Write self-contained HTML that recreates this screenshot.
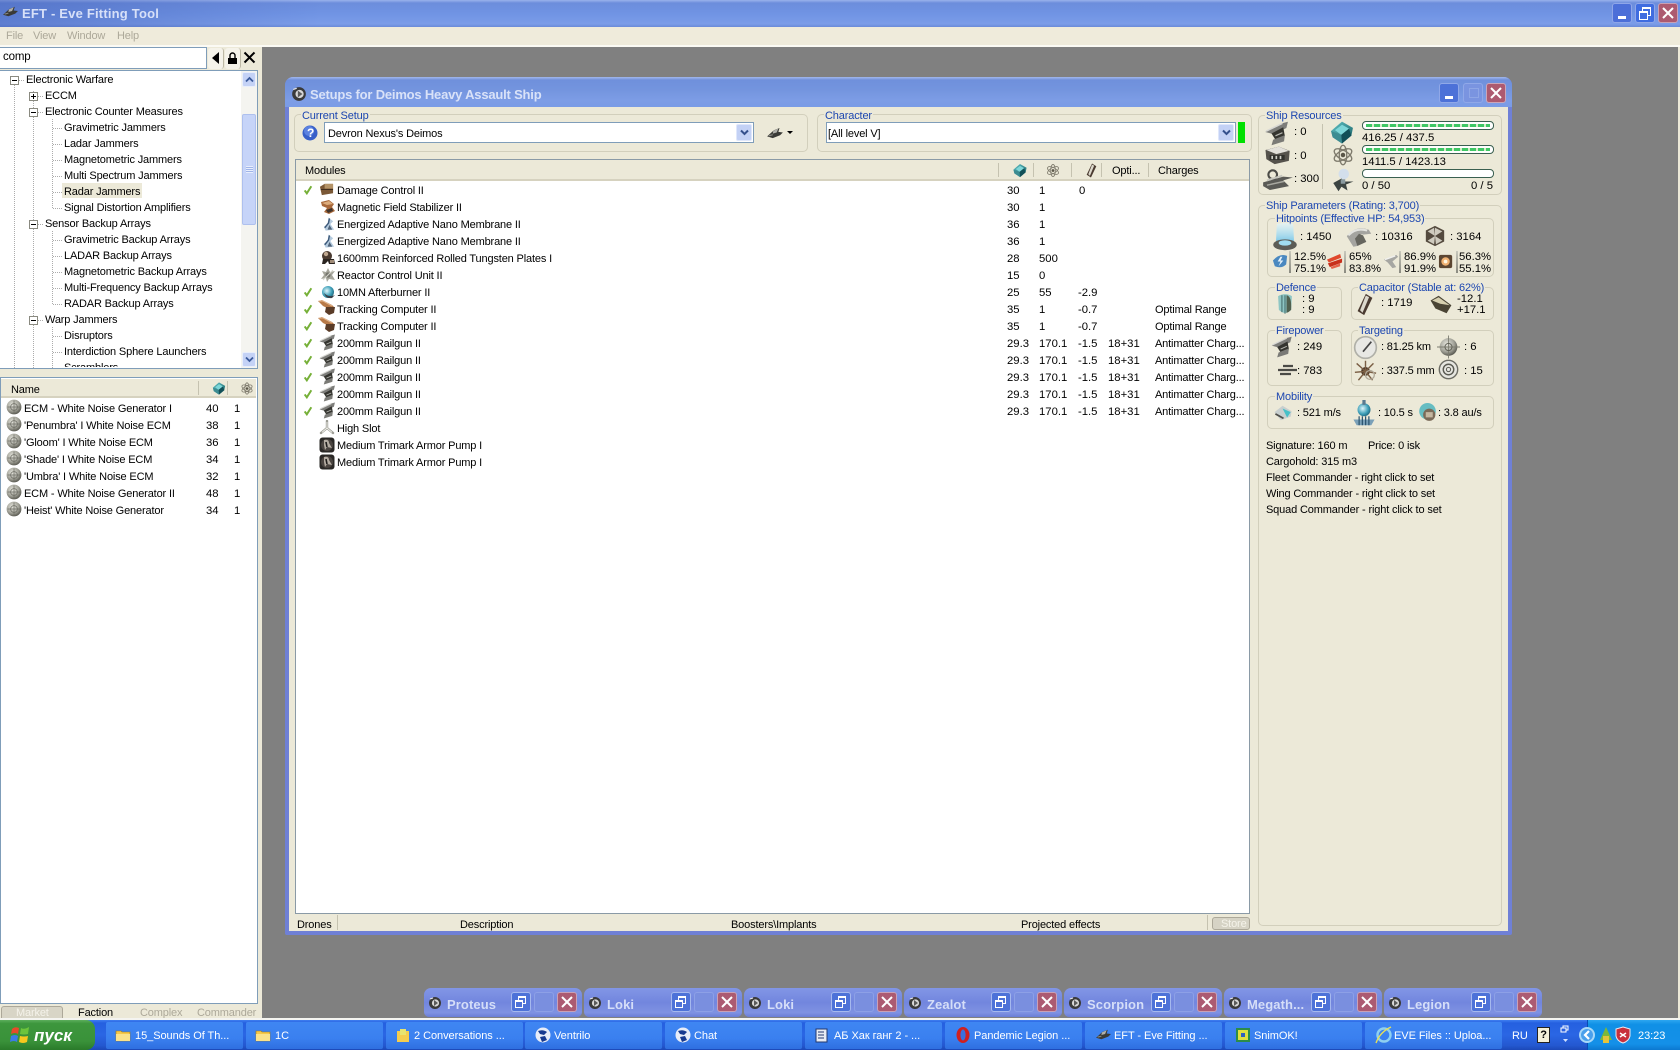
<!DOCTYPE html>
<html><head><meta charset="utf-8"><title>EFT - Eve Fitting Tool</title>
<style>
html,body{margin:0;padding:0;width:1680px;height:1050px;overflow:hidden;background:#808080}
body{position:relative;font-family:"Liberation Sans","Noto Sans CJK SC",sans-serif;font-size:11px;letter-spacing:-.15px;color:#000}
div,span,svg{position:absolute}
.t{white-space:nowrap;line-height:16px;height:16px;margin-top:1px}
.n{font-size:11.3px;letter-spacing:0}
.fs{border:1px solid #d2cfbc;border-radius:5px;box-sizing:border-box}
.lb{white-space:nowrap;line-height:14px;height:14px;margin-top:1px;color:#1c46b0;background:#ece9d8;padding:0 1px 0 1px}
.g{color:#aca899}
.w{color:#fff}
.bar{height:9px;width:132px;left:1362px;border:1px solid #3a5f50;border-radius:4px;box-sizing:border-box;background:#fff}
.bar i{position:absolute;left:3px;right:3px;top:2px;height:3px;background:repeating-linear-gradient(90deg,#3fc765 0 6px,#d5ecc9 6px 8px)}
.mw{top:988px;width:158px;height:29px;border-radius:7px 7px 5px 5px;background:linear-gradient(#8296e6,#7286de 50%,#7f92e2 85%,#6a7ed6)}
.mt{left:23px;top:9px;font-weight:bold;font-size:13px;line-height:16px;color:#d5def8;white-space:nowrap;letter-spacing:.1px}
.br,.bm,.bc{top:4px;width:20px;height:20px;border-radius:3px;box-sizing:border-box}
.br{left:87px;background:#4d72d8;border:1px solid #a6b9ee}
.bm{left:110px;background:#7a8fdf;border:1px solid #8da0e6}
.bc{left:133px;background:#ac5b72;border:1px solid #c9a0b6}
.tb{top:1022px;height:27px;width:137px;background:linear-gradient(#3f86f2,#3a80f0 60%,#2f6fe0);border-radius:2px}
.tbt{top:1028px;line-height:16px;color:#fff;white-space:nowrap;font-size:11px;letter-spacing:-.05px}
</style></head><body>

<svg width="0" height="0" style="left:0;top:0">
<defs>
<radialGradient id="gs" cx=".4" cy=".35" r=".7"><stop offset="0" stop-color="#e6e6de"/><stop offset=".6" stop-color="#a2a298"/><stop offset="1" stop-color="#4e4e46"/></radialGradient>
<radialGradient id="gb" cx=".4" cy=".4" r=".7"><stop offset="0" stop-color="#dff6fb"/><stop offset=".6" stop-color="#3e9fb8"/><stop offset="1" stop-color="#1a5a70"/></radialGradient>
<linearGradient id="gt" x1="0" y1="0" x2="1" y2="1"><stop offset="0" stop-color="#63c4c8"/><stop offset="1" stop-color="#145c60"/></linearGradient>
<linearGradient id="gh" x1="0" y1="0" x2="0" y2="1"><stop offset="0" stop-color="#e4f6fb" stop-opacity=".7"/><stop offset="1" stop-color="#7cc8e8"/></linearGradient>
</defs>
<symbol id="chk" viewBox="0 0 12 12"><path d="M2 6.500 L4.600 10 L10 1.500" fill="none" stroke="#76b038" stroke-width="2.400"/></symbol>
<symbol id="dc" viewBox="0 0 16 16"><path d="M1 5 L6 2 L15 2 L15 12 L3 14Z" fill="#7a5836"/><path d="M6 2h9v5H6z" fill="#b59468"/><path d="M2 8h13" stroke="#3e2c1c"/></symbol>
<symbol id="mag" viewBox="0 0 16 16"><path d="M1 3 L9 1 L14 5 L12 8 L15 12 L9 15 L4 13 L7 9 L2 7Z" fill="#a8683a"/><path d="M2 4l7-2 4 3-6 1z" fill="#dcac7c"/><path d="M6 11l6-2 1 3-5 2z" fill="#40342c"/></symbol>
<symbol id="nano" viewBox="0 0 16 16"><path d="M8 1 L13 5 L10 8 L14 14 L5 15 L3 11 L7 8Z" fill="#b4cade"/><path d="M9 2 L8 7 L4 12" stroke="#3c5878" stroke-width="1.500" fill="none"/><path d="M9 9l3 5-5 0z" fill="#50647a"/></symbol>
<symbol id="plate" viewBox="0 0 16 16"><circle cx="7" cy="6" r="5" fill="#4a3a30"/><circle cx="6" cy="4" r="2.200" fill="#c0a890"/><path d="M3 9h11l1 5H9l-1-3-3 3H2z" fill="#2a2420"/><path d="M10 10h4v3h-4z" fill="#a08c78"/></symbol>
<symbol id="rcu" viewBox="0 0 16 16"><path d="M8 1 L10 5 L15 4 L12 8 L15 13 L9 12 L7 15 L6 11 L1 12 L4 8 L2 4 L6 5Z" fill="#a6a69c"/><circle cx="8" cy="8" r="2.600" fill="#76766e"/><path d="M3 13L13 3" stroke="#d8d8cf"/></symbol>
<symbol id="ab" viewBox="0 0 16 16"><circle cx="8" cy="8" r="6" fill="url(#gb)"/><path d="M4 9 Q9 14 15 11 L12 14 Q6 15 4 9Z" fill="#3a4048"/></symbol>
<symbol id="tc" viewBox="0 0 18 16"><path d="M0 1 L4 0 L14 5 L17 8 L13 10 L5 6Z" fill="#b87a48"/><path d="M1 1l4 0 9 5" stroke="#e4b890" fill="none"/><path d="M8 7h9l-1 6-5 2-4-3z" fill="#5a3c28"/></symbol>
<symbol id="gun" viewBox="0 0 32 32"><path d="M1 14 L22 3 L30 1 L28 9 L12 17Z" fill="#7d7d7a"/><path d="M2 13 L23 3" stroke="#d8d8d4" stroke-width="2"/><path d="M9 16 L24 8 L26 19 L14 24Z" fill="#34342f"/><path d="M11 24 L26 18 L25 26 L9 31Z" fill="#7a7a76"/><path d="M14 19l9-4" stroke="#b6b6b0" stroke-width="1.500"/></symbol>
<symbol id="slot" viewBox="0 0 16 16"><path d="M8 1v7M8 8L2 13M8 8l6 5" stroke="#9c9c94" stroke-width="2.400" fill="none" stroke-linecap="round"/><path d="M8 2v6M8 8L3 12.400M8 8l5 4.400" stroke="#f0f0ea" stroke-width=".9" fill="none"/></symbol>
<symbol id="pump" viewBox="0 0 16 16"><rect x=".5" y=".5" width="15" height="15" rx="3" fill="#2a2826"/><circle cx="8" cy="8" r="6" fill="#4a4440"/><path d="M5 3 Q10 2 10 6 L13 11 L8 10 L6 13 L5 8Z" fill="#b4aca2"/><path d="M7 5l1 5" stroke="#1e1c1a" stroke-width="1.600"/></symbol>
<symbol id="ecm" viewBox="0 0 16 16"><circle cx="8" cy="8" r="7.400" fill="url(#gs)"/><path d="M1.500 8h13M8 1.500v13" stroke="#6c6c64" stroke-width=".7"/><circle cx="8" cy="8" r="3.400" fill="none" stroke="#6c6c64" stroke-width=".7"/></symbol>
<symbol id="cpu" viewBox="0 0 32 32"><path d="M2 14 L16 2 L30 10 L28 20 L16 30 L4 22Z" fill="url(#gt)"/><path d="M7 13 L16 6 L25 11 L15 19Z" fill="#7dd6d8"/><path d="M15 19 L16 30 L28 20 L25 11Z" fill="#125058"/><path d="M2 14l2 8 12 8-1-11z" fill="#3c8c92"/></symbol>
<symbol id="atom" viewBox="0 0 32 32"><g fill="none" stroke="#7e7a6c" stroke-width="1.800"><ellipse cx="16" cy="16" rx="13" ry="6" transform="rotate(30 16 16)"/><ellipse cx="16" cy="16" rx="13" ry="6" transform="rotate(-30 16 16)"/><ellipse cx="16" cy="16" rx="13" ry="5" transform="rotate(90 16 16)"/></g><circle cx="16" cy="16" r="3" fill="#5a5648"/></symbol>
<symbol id="drone" viewBox="0 0 32 32"><circle cx="17" cy="8" r="7" fill="#d3dfec"/><path d="M3 20 L14 14 L17 18 L30 18 L20 22 L22 30 L14 25 L10 31Z" fill="#3c4442"/><path d="M13 15h6v6h-6z" fill="#8a9aa0"/></symbol>
<symbol id="ship2" viewBox="0 0 32 20"><path d="M2 16 L14 5 L24 1 L22 8 L30 9 L25 14 L12 19Z" fill="#3a3a36"/><path d="M13 6l9-4-3 7-7 2z" fill="#b0b0aa"/><path d="M5 15l7-2" stroke="#8a8a84" stroke-width="2"/></symbol>
<symbol id="mod2" viewBox="0 0 32 24"><path d="M1 6 L17 2 L30 7 L29 19 L12 23 L2 17Z" fill="#55524c"/><path d="M2 6 L17 2 L29 7 L14 11Z" fill="#e2e0da"/><path d="M6 12h18v6H6z" fill="#30302c"/><path d="M8 13h2v4H8zM13 13h2v4h-2zM18 13h2v4h-2z" fill="#cfcfc8"/></symbol>
<symbol id="launch" viewBox="0 0 32 24"><path d="M1 16 L22 10 L32 11 L22 14 L28 20 L8 24 L1 20Z" fill="#5a5a56"/><circle cx="11" cy="8" r="4.500" fill="none" stroke="#4c4c48" stroke-width="2.200"/><path d="M5 14l16-5" stroke="#c6c6be" stroke-width="2"/><path d="M5 19l18-4" stroke="#a8a8a0" stroke-width="1.500"/></symbol>
<symbol id="shield" viewBox="0 0 28 32"><path d="M5 1 Q14 -1 23 1 L24 21 L4 21Z" fill="url(#gh)"/><ellipse cx="14" cy="24" rx="13" ry="6" fill="#5c5c56"/><ellipse cx="14" cy="22" rx="7" ry="3" fill="#a0dcf0"/></symbol>
<symbol id="armor" viewBox="0 0 32 26"><path d="M1 12 Q12 -2 28 4 L31 9 L21 10 Q17 8 12 14 L14 24 L9 25Z" fill="#a4a4a0"/><path d="M3 11 Q12 1 26 5" stroke="#e4e4e0" stroke-width="2.500" fill="none"/><path d="M11 15l5-6 5 2 4 8-11 5z" fill="#66665f"/></symbol>
<symbol id="hull" viewBox="0 0 24 24"><path d="M12 1 L22 6 L22 18 L12 23 L2 18 L2 6Z" fill="#544a3e"/><path d="M12 3 L12 12 L20 7Z M12 12 L4 7 L11 3Z M12 12 L20 17 L13 21Z M12 12 L4 17 L11 21Z" fill="#cfcbbf"/></symbol>
<symbol id="rem" viewBox="0 0 18 18"><path d="M1 8 Q8 0 16 3 L15 12 Q10 17 3 14Z" fill="#4a88c0"/><path d="M9 4L6 9h3l-2 5 5-6H9l2-4z" fill="#e6f2fa"/></symbol>
<symbol id="rth" viewBox="0 0 18 18"><path d="M1 7 L15 1 L16 5 L3 10Z" fill="#e0482c"/><path d="M2 11 L17 6 L17 10 L4 15Z" fill="#c8301c"/><path d="M5 15 L15 11 L15 14 L6 17Z" fill="#e4634a"/></symbol>
<symbol id="rkn" viewBox="0 0 18 18"><path d="M1 7 L14 2 L16 4 L10 9 L14 15 L10 16 L5 10Z" fill="#a6a6a2"/><path d="M2 7l11-4" stroke="#f0f0ee" stroke-width="1.500"/></symbol>
<symbol id="rex" viewBox="0 0 18 18"><rect x="1" y="2" width="14" height="14" rx="2" fill="#5c4632"/><circle cx="8" cy="9" r="4.500" fill="#f0b070"/><circle cx="8" cy="9" r="2" fill="#fff6e0"/></symbol>
<symbol id="mini" viewBox="0 0 14 14"><circle cx="7" cy="7" r="6" fill="#3a3a3a"/><circle cx="7.500" cy="7" r="3.600" fill="#d8d8d8"/><path d="M6 4l4 3-4 3z" fill="#5a5a5a"/><path d="M2 3l3-1" stroke="#e8e8e8"/></symbol>
<symbol id="ub" viewBox="0 0 26 30"><path d="M4 4 Q13 -1 22 4 L21 22 Q13 30 5 22Z" fill="#8ec6c4"/><path d="M9 3 L9 25 M13 3 L13 27" stroke="#3a5e5e" stroke-width="1.200"/><path d="M15 3 Q22 4 21 22 Q18 25 15 26Z" fill="#50604f"/></symbol>
<symbol id="capb" viewBox="0 0 20 28"><path d="M11 1 L19 6 L9 27 L1 22Z" fill="#4a3a30"/><path d="M11 3 L15 5 L7 24 L4 21Z" fill="#dcd8cc"/></symbol>
<symbol id="capr" viewBox="0 0 30 26"><path d="M2 8 L12 2 L28 14 L22 24 L8 18Z" fill="#4a4434"/><path d="M4 8 L12 4 L26 14 L14 12Z" fill="#d6cfaf"/></symbol>
<symbol id="speed" viewBox="0 0 30 30"><circle cx="15" cy="15" r="13" fill="#e8e8e4" stroke="#b0b0a8" stroke-width="2"/><path d="M12 20L22 8" stroke="#444" stroke-width="2"/></symbol>
<symbol id="compass" viewBox="0 0 26 26"><circle cx="13" cy="13" r="10" fill="url(#gs)"/><path d="M13 0v26M0 13h26" stroke="#7c7c70"/><circle cx="13" cy="13" r="4" fill="none" stroke="#5c5c52"/></symbol>
<symbol id="spider" viewBox="0 0 26 26"><circle cx="13" cy="14" r="5" fill="#4a3626"/><path d="M13 14L3 5M13 14L22 5M13 14L1 15M13 14L25 16M13 14L5 24M13 14L21 24M13 14L13 2" stroke="#7a5e44" stroke-width="1.600"/><circle cx="18" cy="18" r="5" fill="none" stroke="#b0a898" stroke-width="1.500"/></symbol>
<symbol id="target" viewBox="0 0 24 24"><circle cx="12" cy="12" r="10.500" fill="#e6e6e0" stroke="#6c6c64" stroke-width="1.600"/><circle cx="12" cy="12" r="6" fill="none" stroke="#5a5a52" stroke-width="1.600"/><circle cx="12" cy="12" r="2.400" fill="none" stroke="#5a5a52" stroke-width="1.200"/></symbol>
<symbol id="abl" viewBox="0 0 22 20"><path d="M1 9 L10 2 L20 8 L19 14 L8 18Z" fill="#c8cfcf"/><path d="M10 5 L19 9 L15 15Z" fill="#46c0c8"/><path d="M2 11l9 5" stroke="#4e4e4a" stroke-width="2"/></symbol>
<symbol id="warp" viewBox="0 0 30 32"><circle cx="15" cy="12" r="8" fill="url(#gb)"/><path d="M13 0h4v6h-4z" fill="#5a7a90"/><path d="M2 24 L28 24 L24 31 L6 31Z" fill="#7aa0b8"/><path d="M9 20v11M13 20v11M17 20v11M21 20v11" stroke="#2c5470" stroke-width="1.500"/></symbol>
<symbol id="warp2" viewBox="0 0 24 26"><circle cx="12" cy="11" r="9.500" fill="#66bdc2"/><circle cx="14" cy="15" r="7" fill="#7a6a58"/><path d="M10 12h8v6h-8z" fill="#c4b6a0"/></symbol>
<symbol id="folder" viewBox="0 0 16 14"><path d="M1 3h5l1 1h8v9H1z" fill="#f5c84a" stroke="#a07a18" stroke-width=".6"/><path d="M1 6h14v7H1z" fill="#fbe28a"/></symbol>
</svg>

<!-- App title -->
<div style="left:0;top:0;width:1680px;height:27px;background:linear-gradient(#9ab2ec 0,#6c8ddc 3px,#7094e4 14px,#7b9ce8 24px,#6a8ad8 100%)"></div>
<div style="left:0;top:0;width:320px;height:27px;background:linear-gradient(90deg,rgba(60,90,180,.45),rgba(60,90,180,0))"></div>
<svg style="left:2px;top:5px" width="17" height="13"><use href="#ship2" width="17" height="13"/></svg>
<div class="t" style="left:22px;top:5px;font-weight:bold;font-size:13px;color:#d7e0f8;letter-spacing:.2px">EFT - Eve Fitting Tool</div>
<div style="left:1612px;top:3px;width:20px;height:20px;background:#4c6fd8;border:1px solid #8fa6e8;box-sizing:border-box;border-radius:3px"><div style="left:5px;top:12px;width:8px;height:3px;background:#fff"></div></div>
<div style="left:1635px;top:3px;width:20px;height:20px;background:#3f6ce0;border:1px solid #8fa6e8;box-sizing:border-box;border-radius:3px"><div style="left:6px;top:3px;width:7px;height:6px;border:1px solid #fff;border-top-width:2px"></div><div style="left:3px;top:7px;width:7px;height:6px;border:1px solid #fff;border-top-width:2px;background:#3f6ce0"></div></div>
<div style="left:1658px;top:3px;width:20px;height:20px;background:#ad5a70;border:1px solid #c8a0b4;box-sizing:border-box;border-radius:3px"><svg style="left:3px;top:3px" width="12" height="12"><path d="M1 1L11 11M11 1L1 11" stroke="#fff" stroke-width="2"/></svg></div>

<!-- Menu -->
<div style="left:0;top:27px;width:1680px;height:18px;background:#efebdb"></div>
<div style="left:0;top:45px;width:1680px;height:2px;background:#fbfaf4"></div>
<div class="t g" style="left:6px;top:27px">File</div>
<div class="t g" style="left:33px;top:27px">View</div>
<div class="t g" style="left:67px;top:27px">Window</div>
<div class="t g" style="left:117px;top:27px">Help</div>

<!-- Right sliver -->
<div style="left:1678px;top:47px;width:2px;height:972px;background:#ece9d8"></div>

<!-- Left panel -->
<div style="left:0;top:47px;width:262px;height:972px;background:#ece9d8"></div>
<div style="left:0;top:47px;width:207px;height:22px;background:#fff;border:1px solid #7f9db9;border-left:0;box-sizing:border-box"></div>
<div class="t" style="left:3px;top:48px;font-size:11.5px">comp</div>
<div style="left:208px;top:48px;width:16px;height:21px;background:#f5f3ea;border-radius:3px;border-right:1px solid #bdb9a6;box-sizing:border-box"><svg style="left:3px;top:4px" width="9" height="12"><path d="M8 0V12L1 6Z" fill="#000"/></svg></div>
<div style="left:225px;top:48px;width:16px;height:21px;background:#f5f3ea;border-radius:3px;border-right:1px solid #bdb9a6;box-sizing:border-box"><svg style="left:2px;top:4px" width="11" height="12"><path d="M3 6V3.500a2.500 2.500 0 0 1 5 0V6" fill="none" stroke="#000" stroke-width="1.400"/><rect x="1" y="6" width="9" height="6" fill="#000"/></svg></div>
<svg style="left:243px;top:51px" width="13" height="13"><path d="M1.500 1.500L11.500 11.500M11.500 1.500L1.500 11.500" stroke="#000" stroke-width="2"/></svg>

<!-- Tree -->
<div style="left:0;top:70px;width:258px;height:299px;background:#fff;border:1px solid #7f9db9;border-left:0;box-sizing:border-box;overflow:hidden">
<svg style="left:0;top:-70px" width="240" height="400">
<g stroke="#acacac" stroke-dasharray="1 1" fill="none">
<path d="M14.500 84V368M33.500 90V368M52.500 118V208M52.500 230V304M52.500 326V368"/>
<path d="M19 79.500H25M38 95.500H44M38 111.500H44M38 223.500H44M38 319.500H44"/>
<path d="M53 127.500H62M53 143.500H62M53 159.500H62M53 175.500H62M53 191.500H62M53 207.500H62M53 239.500H62M53 255.500H62M53 271.500H62M53 287.500H62M53 303.500H62M53 335.500H62M53 351.500H62M53 367.500H62"/>
</g>
<g fill="#fff" stroke="#8a8a80"><rect x="10.500" y="75.500" width="8" height="8"/><rect x="29.500" y="91.500" width="8" height="8"/><rect x="29.500" y="107.500" width="8" height="8"/><rect x="29.500" y="219.500" width="8" height="8"/><rect x="29.500" y="315.500" width="8" height="8"/></g>
<path d="M12 79.500h5M31 95.500h5M33.500 93v5M31 111.500h5M31 223.500h5M31 319.500h5" stroke="#000" fill="none"/>
</svg>
</div>
<div style="left:62px;top:183px;width:80px;height:15px;background:#ece9d8"></div>
<div class="t" style="left:26px;top:71px">Electronic Warfare</div>
<div class="t" style="left:45px;top:87px">ECCM</div>
<div class="t" style="left:45px;top:103px">Electronic Counter Measures</div>
<div class="t" style="left:64px;top:119px">Gravimetric Jammers</div>
<div class="t" style="left:64px;top:135px">Ladar Jammers</div>
<div class="t" style="left:64px;top:151px">Magnetometric Jammers</div>
<div class="t" style="left:64px;top:167px">Multi Spectrum Jammers</div>
<div class="t" style="left:64px;top:183px">Radar Jammers</div>
<div class="t" style="left:64px;top:199px">Signal Distortion Amplifiers</div>
<div class="t" style="left:45px;top:215px">Sensor Backup Arrays</div>
<div class="t" style="left:64px;top:231px">Gravimetric Backup Arrays</div>
<div class="t" style="left:64px;top:247px">LADAR Backup Arrays</div>
<div class="t" style="left:64px;top:263px">Magnetometric Backup Arrays</div>
<div class="t" style="left:64px;top:279px">Multi-Frequency Backup Arrays</div>
<div class="t" style="left:64px;top:295px">RADAR Backup Arrays</div>
<div class="t" style="left:45px;top:311px">Warp Jammers</div>
<div class="t" style="left:64px;top:327px">Disruptors</div>
<div class="t" style="left:64px;top:343px">Interdiction Sphere Launchers</div>
<div class="t" style="left:64px;top:359px;height:7px;overflow:hidden">Scramblers</div>
<!-- tree scrollbar -->
<div style="left:241px;top:71px;width:16px;height:297px;background:#f4f4f0"></div>
<div style="left:242px;top:72px;width:14px;height:15px;background:#c4d2f6;border:1px solid #e8eefb;box-sizing:border-box;border-radius:2px"><svg style="left:2px;top:3px" width="9" height="7"><path d="M1 5.500L4.500 2L8 5.500" fill="none" stroke="#3b5a9c" stroke-width="1.800"/></svg></div>
<div style="left:242px;top:114px;width:14px;height:111px;background:#c6d4f8;border:1px solid #aec0ee;box-sizing:border-box;border-radius:2px"><div style="left:3px;top:51px;width:7px;height:7px;background:repeating-linear-gradient(#e8eefc 0 1px,#9fb4e8 1px 2px)"></div></div>
<div style="left:242px;top:352px;width:14px;height:15px;background:#c4d2f6;border:1px solid #e8eefb;box-sizing:border-box;border-radius:2px"><svg style="left:2px;top:3px" width="9" height="7"><path d="M1 1.500L4.500 5L8 1.500" fill="none" stroke="#3b5a9c" stroke-width="1.800"/></svg></div>

<!-- Lower list -->
<div style="left:0;top:377px;width:258px;height:627px;background:#fff;border:1px solid #7f9db9;box-sizing:border-box"></div>
<div style="left:1px;top:379px;width:255px;height:19px;background:#ece9d8;border-bottom:2px solid #d6d2bf;box-sizing:border-box"></div>
<div style="left:198px;top:381px;width:1px;height:14px;background:#c5c2b0"></div>
<div style="left:227px;top:381px;width:1px;height:14px;background:#c5c2b0"></div>
<div class="t" style="left:11px;top:381px">Name</div>
<svg style="left:212px;top:381px" width="14" height="15"><use href="#cpu" width="14" height="15"/></svg>
<svg style="left:240px;top:381px" width="14" height="15"><use href="#atom" width="14" height="15"/></svg>

<svg style="left:6px;top:399px" width="16" height="16"><use href="#ecm" width="16" height="16"/></svg>
<svg style="left:6px;top:416px" width="16" height="16"><use href="#ecm" width="16" height="16"/></svg>
<svg style="left:6px;top:433px" width="16" height="16"><use href="#ecm" width="16" height="16"/></svg>
<svg style="left:6px;top:450px" width="16" height="16"><use href="#ecm" width="16" height="16"/></svg>
<svg style="left:6px;top:467px" width="16" height="16"><use href="#ecm" width="16" height="16"/></svg>
<svg style="left:6px;top:484px" width="16" height="16"><use href="#ecm" width="16" height="16"/></svg>
<svg style="left:6px;top:501px" width="16" height="16"><use href="#ecm" width="16" height="16"/></svg>
<div class="t" style="left:24px;top:400px">ECM - White Noise Generator I</div><div class="t n" style="left:206px;top:400px">40</div><div class="t n" style="left:234px;top:400px">1</div>
<div class="t" style="left:24px;top:417px">'Penumbra' I White Noise ECM</div><div class="t n" style="left:206px;top:417px">38</div><div class="t n" style="left:234px;top:417px">1</div>
<div class="t" style="left:24px;top:434px">'Gloom' I White Noise ECM</div><div class="t n" style="left:206px;top:434px">36</div><div class="t n" style="left:234px;top:434px">1</div>
<div class="t" style="left:24px;top:451px">'Shade' I White Noise ECM</div><div class="t n" style="left:206px;top:451px">34</div><div class="t n" style="left:234px;top:451px">1</div>
<div class="t" style="left:24px;top:468px">'Umbra' I White Noise ECM</div><div class="t n" style="left:206px;top:468px">32</div><div class="t n" style="left:234px;top:468px">1</div>
<div class="t" style="left:24px;top:485px">ECM - White Noise Generator II</div><div class="t n" style="left:206px;top:485px">48</div><div class="t n" style="left:234px;top:485px">1</div>
<div class="t" style="left:24px;top:502px">'Heist' White Noise Generator</div><div class="t n" style="left:206px;top:502px">34</div><div class="t n" style="left:234px;top:502px">1</div>

<!-- Bottom tabs -->
<div style="left:1px;top:1006px;width:62px;height:13px;background:#d8d5c6;border:1px solid #aca899;border-radius:3px 3px 0 0;box-sizing:border-box"></div>
<div class="t" style="left:16px;top:1004px;color:#f5f3ea">Market</div>
<div class="t" style="left:78px;top:1004px">Faction</div>
<div class="t g" style="left:140px;top:1004px">Complex</div>
<div class="t g" style="left:197px;top:1004px">Commander</div>

<!-- Main window -->
<div style="left:285px;top:77px;width:1227px;height:858px;background:#6f80d6;border-radius:8px 8px 2px 2px"></div>
<div style="left:285px;top:77px;width:1227px;height:30px;border-radius:8px 8px 0 0;background:linear-gradient(#a3b8ec 0,#6f90dc 3px,#7394de 12px,#7d9de6 24px,#7a9ce6 100%)"></div>
<div style="left:289px;top:107px;width:1219px;height:824px;background:#ece9d8"></div>
<svg style="left:291px;top:86px" width="16" height="16"><use href="#mini" width="16" height="16"/></svg>
<div class="t" style="left:310px;top:86px;font-weight:bold;font-size:13px;color:#d9e2f8;letter-spacing:-.2px">Setups for Deimos Heavy Assault Ship</div>
<div style="left:1439px;top:83px;width:20px;height:20px;background:#4c71d8;border:1px solid #90a8e8;box-sizing:border-box;border-radius:3px"><div style="left:5px;top:12px;width:8px;height:3px;background:#fff"></div></div>
<div style="left:1463px;top:83px;width:20px;height:20px;background:#7a94e0;border:1px solid #90a8e8;box-sizing:border-box;border-radius:3px"><div style="left:5px;top:4px;width:8px;height:8px;border:1px solid #8ea6e6"></div></div>
<div style="left:1486px;top:83px;width:20px;height:20px;background:#ad5a70;border:1px solid #cba5b8;box-sizing:border-box;border-radius:3px"><svg style="left:3px;top:3px" width="12" height="12"><path d="M1 1L11 11M11 1L1 11" stroke="#fff" stroke-width="2"/></svg></div>

<!-- Current setup -->
<div class="fs" style="left:294px;top:114px;width:514px;height:38px"></div>
<div class="lb" style="left:301px;top:108px">Current Setup</div>
<svg style="left:302px;top:125px" width="16" height="16"><circle cx="8" cy="8" r="7.500" fill="#3860c8"/><circle cx="7" cy="6" r="5" fill="#5c82e0"/></svg>
<div class="t w" style="left:307px;top:124px;font-weight:bold;font-size:12px">?</div>
<div style="left:324px;top:122px;width:430px;height:21px;background:#fff;border:1px solid #7f9db9;box-sizing:border-box"></div>
<div class="t" style="left:328px;top:125px">Devron Nexus's Deimos</div>
<div style="left:736px;top:124px;width:16px;height:17px;background:#c3d1f5;border:1px solid #dfe7fb;box-sizing:border-box;border-radius:2px"><svg style="left:2px;top:4px" width="11" height="8"><path d="M2 1.500L5.500 5L9 1.500" fill="none" stroke="#34508c" stroke-width="2"/></svg></div>
<svg style="left:766px;top:126px" width="18" height="14"><use href="#ship2" width="18" height="14"/></svg>
<svg style="left:787px;top:131px" width="7" height="4"><path d="M0 0H6L3 3Z" fill="#000"/></svg>

<div class="fs" style="left:817px;top:114px;width:435px;height:38px"></div>
<div class="lb" style="left:824px;top:108px">Character</div>
<div style="left:826px;top:122px;width:410px;height:21px;background:#fff;border:1px solid #7f9db9;box-sizing:border-box"></div>
<div class="t" style="left:828px;top:125px">[All level V]</div>
<div style="left:1218px;top:124px;width:16px;height:17px;background:#c3d1f5;border:1px solid #dfe7fb;box-sizing:border-box;border-radius:2px"><svg style="left:2px;top:4px" width="11" height="8"><path d="M2 1.500L5.500 5L9 1.500" fill="none" stroke="#34508c" stroke-width="2"/></svg></div>
<div style="left:1238px;top:122px;width:7px;height:21px;background:#00e000"></div>

<!-- Modules list -->
<div style="left:295px;top:159px;width:955px;height:755px;background:#fff;border:1px solid #8a9aa6;box-sizing:border-box"></div>
<div style="left:296px;top:160px;width:953px;height:21px;background:#ece9d8;border-bottom:2px solid #d6d2bf;box-sizing:border-box"></div>
<div style="left:998px;top:163px;width:1px;height:14px;background:#c5c2b0"></div>
<div style="left:1033px;top:163px;width:1px;height:14px;background:#c5c2b0"></div>
<div style="left:1071px;top:163px;width:1px;height:14px;background:#c5c2b0"></div>
<div style="left:1101px;top:163px;width:1px;height:14px;background:#c5c2b0"></div>
<div style="left:1148px;top:163px;width:1px;height:14px;background:#c5c2b0"></div>
<div class="t" style="left:305px;top:162px">Modules</div>
<svg style="left:1012px;top:163px" width="16" height="15"><use href="#cpu" width="16" height="15"/></svg>
<svg style="left:1045px;top:163px" width="16" height="15"><use href="#atom" width="16" height="15"/></svg>
<svg style="left:1086px;top:163px" width="11" height="15"><use href="#capb" width="11" height="15"/></svg>
<div class="t" style="left:1112px;top:162px">Opti...</div>
<div class="t" style="left:1158px;top:162px">Charges</div>

<!-- checks -->
<svg style="left:303px;top:185px" width="10" height="10"><use href="#chk" width="10" height="10"/></svg>
<svg style="left:303px;top:287px" width="10" height="10"><use href="#chk" width="10" height="10"/></svg>
<svg style="left:303px;top:304px" width="10" height="10"><use href="#chk" width="10" height="10"/></svg>
<svg style="left:303px;top:321px" width="10" height="10"><use href="#chk" width="10" height="10"/></svg>
<svg style="left:303px;top:338px" width="10" height="10"><use href="#chk" width="10" height="10"/></svg>
<svg style="left:303px;top:355px" width="10" height="10"><use href="#chk" width="10" height="10"/></svg>
<svg style="left:303px;top:372px" width="10" height="10"><use href="#chk" width="10" height="10"/></svg>
<svg style="left:303px;top:389px" width="10" height="10"><use href="#chk" width="10" height="10"/></svg>
<svg style="left:303px;top:406px" width="10" height="10"><use href="#chk" width="10" height="10"/></svg>
<!-- module icons -->
<svg style="left:319px;top:182px" width="15" height="15"><use href="#dc" width="15" height="15"/></svg>
<svg style="left:320px;top:199px" width="16" height="16"><use href="#mag" width="16" height="16"/></svg>
<svg style="left:321px;top:216px" width="15" height="16"><use href="#nano" width="15" height="16"/></svg>
<svg style="left:321px;top:233px" width="15" height="16"><use href="#nano" width="15" height="16"/></svg>
<svg style="left:320px;top:250px" width="16" height="16"><use href="#plate" width="16" height="16"/></svg>
<svg style="left:320px;top:267px" width="16" height="16"><use href="#rcu" width="16" height="16"/></svg>
<svg style="left:320px;top:284px" width="16" height="16"><use href="#ab" width="16" height="16"/></svg>
<svg style="left:318px;top:300px" width="18" height="16"><use href="#tc" width="18" height="16"/></svg>
<svg style="left:318px;top:317px" width="18" height="16"><use href="#tc" width="18" height="16"/></svg>
<svg style="left:319px;top:334px" width="17" height="17"><use href="#gun" width="17" height="17"/></svg>
<svg style="left:319px;top:351px" width="17" height="17"><use href="#gun" width="17" height="17"/></svg>
<svg style="left:319px;top:368px" width="17" height="17"><use href="#gun" width="17" height="17"/></svg>
<svg style="left:319px;top:385px" width="17" height="17"><use href="#gun" width="17" height="17"/></svg>
<svg style="left:319px;top:402px" width="17" height="17"><use href="#gun" width="17" height="17"/></svg>
<svg style="left:319px;top:420px" width="16" height="16"><use href="#slot" width="16" height="16"/></svg>
<svg style="left:319px;top:437px" width="16" height="16"><use href="#pump" width="16" height="16"/></svg>
<svg style="left:319px;top:454px" width="16" height="16"><use href="#pump" width="16" height="16"/></svg>
<!-- module rows -->
<div class="t" style="left:337px;top:182px">Damage Control II</div><div class="t n" style="left:1007px;top:182px">30</div><div class="t n" style="left:1039px;top:182px">1</div><div class="t n" style="left:1079px;top:182px">0</div>
<div class="t" style="left:337px;top:199px">Magnetic Field Stabilizer II</div><div class="t n" style="left:1007px;top:199px">30</div><div class="t n" style="left:1039px;top:199px">1</div>
<div class="t" style="left:337px;top:216px">Energized Adaptive Nano Membrane II</div><div class="t n" style="left:1007px;top:216px">36</div><div class="t n" style="left:1039px;top:216px">1</div>
<div class="t" style="left:337px;top:233px">Energized Adaptive Nano Membrane II</div><div class="t n" style="left:1007px;top:233px">36</div><div class="t n" style="left:1039px;top:233px">1</div>
<div class="t" style="left:337px;top:250px">1600mm Reinforced Rolled Tungsten Plates I</div><div class="t n" style="left:1007px;top:250px">28</div><div class="t n" style="left:1039px;top:250px">500</div>
<div class="t" style="left:337px;top:267px">Reactor Control Unit II</div><div class="t n" style="left:1007px;top:267px">15</div><div class="t n" style="left:1039px;top:267px">0</div>
<div class="t" style="left:337px;top:284px">10MN Afterburner II</div><div class="t n" style="left:1007px;top:284px">25</div><div class="t n" style="left:1039px;top:284px">55</div><div class="t n" style="left:1078px;top:284px">-2.9</div>
<div class="t" style="left:337px;top:301px">Tracking Computer II</div><div class="t n" style="left:1007px;top:301px">35</div><div class="t n" style="left:1039px;top:301px">1</div><div class="t n" style="left:1078px;top:301px">-0.7</div><div class="t" style="left:1155px;top:301px">Optimal Range</div>
<div class="t" style="left:337px;top:318px">Tracking Computer II</div><div class="t n" style="left:1007px;top:318px">35</div><div class="t n" style="left:1039px;top:318px">1</div><div class="t n" style="left:1078px;top:318px">-0.7</div><div class="t" style="left:1155px;top:318px">Optimal Range</div>
<div class="t" style="left:337px;top:335px">200mm Railgun II</div><div class="t n" style="left:1007px;top:335px">29.3</div><div class="t n" style="left:1039px;top:335px">170.1</div><div class="t n" style="left:1078px;top:335px">-1.5</div><div class="t n" style="left:1108px;top:335px">18+31</div><div class="t" style="left:1155px;top:335px">Antimatter Charg...</div>
<div class="t" style="left:337px;top:352px">200mm Railgun II</div><div class="t n" style="left:1007px;top:352px">29.3</div><div class="t n" style="left:1039px;top:352px">170.1</div><div class="t n" style="left:1078px;top:352px">-1.5</div><div class="t n" style="left:1108px;top:352px">18+31</div><div class="t" style="left:1155px;top:352px">Antimatter Charg...</div>
<div class="t" style="left:337px;top:369px">200mm Railgun II</div><div class="t n" style="left:1007px;top:369px">29.3</div><div class="t n" style="left:1039px;top:369px">170.1</div><div class="t n" style="left:1078px;top:369px">-1.5</div><div class="t n" style="left:1108px;top:369px">18+31</div><div class="t" style="left:1155px;top:369px">Antimatter Charg...</div>
<div class="t" style="left:337px;top:386px">200mm Railgun II</div><div class="t n" style="left:1007px;top:386px">29.3</div><div class="t n" style="left:1039px;top:386px">170.1</div><div class="t n" style="left:1078px;top:386px">-1.5</div><div class="t n" style="left:1108px;top:386px">18+31</div><div class="t" style="left:1155px;top:386px">Antimatter Charg...</div>
<div class="t" style="left:337px;top:403px">200mm Railgun II</div><div class="t n" style="left:1007px;top:403px">29.3</div><div class="t n" style="left:1039px;top:403px">170.1</div><div class="t n" style="left:1078px;top:403px">-1.5</div><div class="t n" style="left:1108px;top:403px">18+31</div><div class="t" style="left:1155px;top:403px">Antimatter Charg...</div>
<div class="t" style="left:337px;top:420px">High Slot</div>
<div class="t" style="left:337px;top:437px">Medium Trimark Armor Pump I</div>
<div class="t" style="left:337px;top:454px">Medium Trimark Armor Pump I</div>

<!-- Status row -->
<div class="t" style="left:297px;top:916px">Drones</div>
<div style="left:337px;top:915px;width:1px;height:15px;background:#c5c2b0"></div>
<div class="t" style="left:460px;top:916px">Description</div>
<div class="t" style="left:731px;top:916px">Boosters\Implants</div>
<div class="t" style="left:1021px;top:916px">Projected effects</div>
<div style="left:1207px;top:915px;width:1px;height:15px;background:#c5c2b0"></div>
<div style="left:1212px;top:917px;width:38px;height:13px;background:#d6d3c5;border:1px solid #aca899;border-radius:3px;box-sizing:border-box"></div>
<div class="t" style="left:1221px;top:915px;color:#f5f3ea">Store</div>

<!-- Ship Resources -->
<div class="fs" style="left:1258px;top:115px;width:244px;height:80px"></div>
<div class="lb" style="left:1265px;top:108px">Ship Resources</div>
<svg style="left:1263px;top:121px" width="28" height="25"><use href="#gun" width="28" height="25"/></svg>
<svg style="left:1264px;top:145px" width="28" height="20"><use href="#mod2" width="28" height="20"/></svg>
<svg style="left:1262px;top:167px" width="31" height="23"><use href="#launch" width="31" height="23"/></svg>
<div class="t n" style="left:1294px;top:123px">: 0</div>
<div class="t n" style="left:1294px;top:147px">: 0</div>
<div class="t n" style="left:1294px;top:170px">: 300</div>
<div style="left:1322px;top:124px;width:1px;height:65px;background:#c5c2b0"></div>
<svg style="left:1328px;top:120px" width="28" height="25"><use href="#cpu" width="28" height="25"/></svg>
<svg style="left:1331px;top:143px" width="24" height="24"><use href="#atom" width="24" height="24"/></svg>
<svg style="left:1331px;top:168px" width="24" height="24"><use href="#drone" width="24" height="24"/></svg>
<div class="bar" style="top:121px"><i></i></div>
<div class="t n" style="left:1362px;top:129px">416.25 / 437.5</div>
<div class="bar" style="top:145px"><i></i></div>
<div class="t n" style="left:1362px;top:153px">1411.5 / 1423.13</div>
<div class="bar" style="top:169px"></div>
<div class="t n" style="left:1362px;top:177px">0 / 50</div>
<div class="t n" style="left:1471px;top:177px">0 / 5</div>

<!-- Ship Parameters -->
<div class="fs" style="left:1258px;top:205px;width:244px;height:721px"></div>
<div class="lb" style="left:1265px;top:198px">Ship Parameters (Rating: 3,700)</div>

<div class="fs" style="left:1267px;top:218px;width:227px;height:59px"></div>
<div class="lb" style="left:1275px;top:211px">Hitpoints (Effective HP: 54,953)</div>
<svg style="left:1272px;top:223px" width="26" height="29"><use href="#shield" width="26" height="29"/></svg>
<div class="t n" style="left:1300px;top:228px">: 1450</div>
<svg style="left:1346px;top:226px" width="26" height="22"><use href="#armor" width="26" height="22"/></svg>
<div class="t n" style="left:1375px;top:228px">: 10316</div>
<svg style="left:1424px;top:225px" width="22" height="22"><use href="#hull" width="22" height="22"/></svg>
<div class="t n" style="left:1450px;top:228px">: 3164</div>

<svg style="left:1272px;top:253px" width="17" height="17"><use href="#rem" width="17" height="17"/></svg>
<svg style="left:1326px;top:253px" width="17" height="17"><use href="#rth" width="17" height="17"/></svg>
<svg style="left:1383px;top:253px" width="17" height="17"><use href="#rkn" width="17" height="17"/></svg>
<svg style="left:1438px;top:253px" width="17" height="17"><use href="#rex" width="17" height="17"/></svg>
<div style="left:1289px;top:251px;width:2px;height:22px;background:linear-gradient(#c8c8bc,#8a8a80)"></div>
<div style="left:1344px;top:251px;width:2px;height:22px;background:linear-gradient(#c8c8bc,#8a8a80)"></div>
<div style="left:1399px;top:251px;width:2px;height:22px;background:linear-gradient(#c8c8bc,#8a8a80)"></div>
<div style="left:1456px;top:251px;width:2px;height:22px;background:linear-gradient(#c8c8bc,#8a8a80)"></div>
<div class="t n" style="left:1294px;top:248px">12.5%</div><div class="t n" style="left:1294px;top:260px">75.1%</div>
<div class="t n" style="left:1349px;top:248px">65%</div><div class="t n" style="left:1349px;top:260px">83.8%</div>
<div class="t n" style="left:1404px;top:248px">86.9%</div><div class="t n" style="left:1404px;top:260px">91.9%</div>
<div class="t n" style="left:1459px;top:248px">56.3%</div><div class="t n" style="left:1459px;top:260px">55.1%</div>

<div class="fs" style="left:1267px;top:287px;width:75px;height:33px"></div>
<div class="lb" style="left:1275px;top:280px">Defence</div>
<svg style="left:1275px;top:293px" width="20" height="23"><use href="#ub" width="20" height="23"/></svg>
<div class="t n" style="left:1302px;top:290px">: 9</div>
<div class="t n" style="left:1302px;top:301px">: 9</div>

<div class="fs" style="left:1351px;top:287px;width:143px;height:33px"></div>
<div class="lb" style="left:1358px;top:280px">Capacitor (Stable at: 62%)</div>
<svg style="left:1356px;top:293px" width="18" height="23"><use href="#capb" width="18" height="23"/></svg>
<div class="t n" style="left:1381px;top:294px">: 1719</div>
<svg style="left:1429px;top:294px" width="24" height="21"><use href="#capr" width="24" height="21"/></svg>
<div class="t n" style="left:1457px;top:290px">-12.1</div>
<div class="t n" style="left:1457px;top:301px">+17.1</div>

<div class="fs" style="left:1267px;top:330px;width:75px;height:56px"></div>
<div class="lb" style="left:1275px;top:323px">Firepower</div>
<svg style="left:1269px;top:336px" width="26" height="22"><use href="#gun" width="26" height="22"/></svg>
<div class="t n" style="left:1297px;top:338px">: 249</div>
<svg style="left:1277px;top:363px" width="20" height="13"><path d="M1 7h19M6 3h10M3 11h11" stroke="#4a4a46" stroke-width="2.200"/></svg>
<div class="t n" style="left:1297px;top:362px">: 783</div>

<div class="fs" style="left:1351px;top:330px;width:143px;height:56px"></div>
<div class="lb" style="left:1358px;top:323px">Targeting</div>
<svg style="left:1353px;top:335px" width="25" height="25"><use href="#speed" width="25" height="25"/></svg>
<div class="t" style="left:1381px;top:338px">: 81.25 km</div>
<svg style="left:1437px;top:335px" width="23" height="24"><use href="#compass" width="23" height="24"/></svg>
<div class="t n" style="left:1464px;top:338px">: 6</div>
<svg style="left:1354px;top:359px" width="23" height="23"><use href="#spider" width="23" height="23"/></svg>
<div class="t" style="left:1381px;top:362px">: 337.5 mm</div>
<svg style="left:1438px;top:359px" width="21" height="21"><use href="#target" width="21" height="21"/></svg>
<div class="t n" style="left:1464px;top:362px">: 15</div>

<div class="fs" style="left:1267px;top:396px;width:227px;height:33px"></div>
<div class="lb" style="left:1275px;top:389px">Mobility</div>
<svg style="left:1273px;top:404px" width="21" height="18"><use href="#abl" width="21" height="18"/></svg>
<div class="t" style="left:1297px;top:404px">: 521 m/s</div>
<svg style="left:1350px;top:400px" width="28" height="26"><use href="#warp" width="28" height="26"/></svg>
<div class="t" style="left:1378px;top:404px">: 10.5 s</div>
<svg style="left:1417px;top:401px" width="21" height="24"><use href="#warp2" width="21" height="24"/></svg>
<div class="t" style="left:1438px;top:404px">: 3.8 au/s</div>

<div class="t" style="left:1266px;top:437px">Signature: 160 m</div>
<div class="t" style="left:1368px;top:437px">Price: 0 isk</div>
<div class="t" style="left:1266px;top:453px">Cargohold: 315 m3</div>
<div class="t" style="left:1266px;top:469px">Fleet Commander - right click to set</div>
<div class="t" style="left:1266px;top:485px">Wing Commander - right click to set</div>
<div class="t" style="left:1266px;top:501px">Squad Commander - right click to set</div>

<!-- Minimized windows -->
<div class="mw" style="left:424px"><svg style="left:4px;top:8px" width="14" height="14"><use href="#mini" width="14" height="14"/></svg><div class="mt">Proteus</div><div class="br"><div style="left:6px;top:3px;width:6px;height:5px;border:1px solid #fff;border-top-width:2px"></div><div style="left:3px;top:7px;width:6px;height:5px;border:1px solid #fff;border-top-width:2px;background:#4d72d8"></div></div><div class="bm"></div><div class="bc"><svg style="left:3px;top:3px" width="12" height="12"><path d="M1 1L11 11M11 1L1 11" stroke="#fff" stroke-width="2"/></svg></div></div>
<div class="mw" style="left:584px"><svg style="left:4px;top:8px" width="14" height="14"><use href="#mini" width="14" height="14"/></svg><div class="mt">Loki</div><div class="br"><div style="left:6px;top:3px;width:6px;height:5px;border:1px solid #fff;border-top-width:2px"></div><div style="left:3px;top:7px;width:6px;height:5px;border:1px solid #fff;border-top-width:2px;background:#4d72d8"></div></div><div class="bm"></div><div class="bc"><svg style="left:3px;top:3px" width="12" height="12"><path d="M1 1L11 11M11 1L1 11" stroke="#fff" stroke-width="2"/></svg></div></div>
<div class="mw" style="left:744px"><svg style="left:4px;top:8px" width="14" height="14"><use href="#mini" width="14" height="14"/></svg><div class="mt">Loki</div><div class="br"><div style="left:6px;top:3px;width:6px;height:5px;border:1px solid #fff;border-top-width:2px"></div><div style="left:3px;top:7px;width:6px;height:5px;border:1px solid #fff;border-top-width:2px;background:#4d72d8"></div></div><div class="bm"></div><div class="bc"><svg style="left:3px;top:3px" width="12" height="12"><path d="M1 1L11 11M11 1L1 11" stroke="#fff" stroke-width="2"/></svg></div></div>
<div class="mw" style="left:904px"><svg style="left:4px;top:8px" width="14" height="14"><use href="#mini" width="14" height="14"/></svg><div class="mt">Zealot</div><div class="br"><div style="left:6px;top:3px;width:6px;height:5px;border:1px solid #fff;border-top-width:2px"></div><div style="left:3px;top:7px;width:6px;height:5px;border:1px solid #fff;border-top-width:2px;background:#4d72d8"></div></div><div class="bm"></div><div class="bc"><svg style="left:3px;top:3px" width="12" height="12"><path d="M1 1L11 11M11 1L1 11" stroke="#fff" stroke-width="2"/></svg></div></div>
<div class="mw" style="left:1064px"><svg style="left:4px;top:8px" width="14" height="14"><use href="#mini" width="14" height="14"/></svg><div class="mt">Scorpion</div><div class="br"><div style="left:6px;top:3px;width:6px;height:5px;border:1px solid #fff;border-top-width:2px"></div><div style="left:3px;top:7px;width:6px;height:5px;border:1px solid #fff;border-top-width:2px;background:#4d72d8"></div></div><div class="bm"></div><div class="bc"><svg style="left:3px;top:3px" width="12" height="12"><path d="M1 1L11 11M11 1L1 11" stroke="#fff" stroke-width="2"/></svg></div></div>
<div class="mw" style="left:1224px"><svg style="left:4px;top:8px" width="14" height="14"><use href="#mini" width="14" height="14"/></svg><div class="mt">Megath...</div><div class="br"><div style="left:6px;top:3px;width:6px;height:5px;border:1px solid #fff;border-top-width:2px"></div><div style="left:3px;top:7px;width:6px;height:5px;border:1px solid #fff;border-top-width:2px;background:#4d72d8"></div></div><div class="bm"></div><div class="bc"><svg style="left:3px;top:3px" width="12" height="12"><path d="M1 1L11 11M11 1L1 11" stroke="#fff" stroke-width="2"/></svg></div></div>
<div class="mw" style="left:1384px"><svg style="left:4px;top:8px" width="14" height="14"><use href="#mini" width="14" height="14"/></svg><div class="mt">Legion</div><div class="br"><div style="left:6px;top:3px;width:6px;height:5px;border:1px solid #fff;border-top-width:2px"></div><div style="left:3px;top:7px;width:6px;height:5px;border:1px solid #fff;border-top-width:2px;background:#4d72d8"></div></div><div class="bm"></div><div class="bc"><svg style="left:3px;top:3px" width="12" height="12"><path d="M1 1L11 11M11 1L1 11" stroke="#fff" stroke-width="2"/></svg></div></div>

<!-- Taskbar -->
<div style="left:0;top:1018px;width:1680px;height:2px;background:#f4f4f0"></div>
<div style="left:0;top:1020px;width:1680px;height:30px;background:linear-gradient(#3f7ef0 0,#2560e0 3px,#2a66e4 50%,#2458d0 85%,#1c48b8 100%)"></div>
<div style="left:0;top:1020px;width:95px;height:30px;border-radius:0 9px 9px 0;background:linear-gradient(#5cae5c 0,#3d963d 12%,#3a923a 70%,#2a7a2a 100%)"></div>
<svg style="left:10px;top:1024px" width="20" height="21"><path d="M2 5 Q5 2 9 4 L8 10 Q5 8 1 10Z" fill="#e84a2a"/><path d="M11 4 Q14 6 19 3 L18 10 Q14 11 10 10Z" fill="#6cc43c"/><path d="M1 12 Q5 10 8 12 L7 18 Q4 16 0 18Z" fill="#3c7ce8"/><path d="M10 12 Q14 13 18 12 L17 18 Q13 20 9 18Z" fill="#f8c81e"/></svg>
<div class="t" style="left:34px;top:1025px;font-size:17px;font-weight:bold;font-style:italic;color:#fff;line-height:20px;height:20px;letter-spacing:0">пуск</div>

<div class="tb" style="left:106px"></div><div class="tb" style="left:246px"></div><div class="tb" style="left:386px"></div><div class="tb" style="left:525px"></div><div class="tb" style="left:665px"></div><div class="tb" style="left:805px"></div><div class="tb" style="left:945px"></div><div class="tb" style="left:1085px"></div><div class="tb" style="left:1225px"></div><div class="tb" style="left:1365px"></div>

<svg style="left:115px;top:1028px" width="16" height="14"><use href="#folder" width="16" height="14"/></svg>
<svg style="left:255px;top:1028px" width="16" height="14"><use href="#folder" width="16" height="14"/></svg>
<svg style="left:396px;top:1028px" width="14" height="15"><rect x="1" y="3" width="12" height="11" fill="#f5cd4e"/><path d="M4 1h6v6H4z" fill="#e8e470"/></svg>
<svg style="left:535px;top:1027px" width="16" height="16"><circle cx="8" cy="8" r="7.500" fill="#e8edf8"/><path d="M3 4Q8 2 12 5L9 8 5 7Z M5 10l5-1 2 4-5 2z" fill="#173a90"/></svg>
<svg style="left:675px;top:1027px" width="16" height="16"><circle cx="8" cy="8" r="7.500" fill="#e8edf8"/><path d="M3 4Q8 2 12 5L9 8 5 7Z M5 10l5-1 2 4-5 2z" fill="#173a90"/></svg>
<svg style="left:814px;top:1027px" width="15" height="16"><rect x="2" y="2" width="11" height="13" fill="#e8ecf4" stroke="#23396e"/><path d="M4 5h6M4 8h6M4 11h6" stroke="#23396e"/></svg>
<svg style="left:955px;top:1026px" width="16" height="18"><ellipse cx="8" cy="9" rx="6.500" ry="8" fill="#d02020"/><ellipse cx="8" cy="9" rx="2.600" ry="5.500" fill="#3a70e0"/></svg>
<svg style="left:1095px;top:1028px" width="17" height="13"><use href="#ship2" width="17" height="13"/></svg>
<svg style="left:1236px;top:1028px" width="14" height="14"><rect width="14" height="14" fill="#2c8c48"/><rect x="2" y="2" width="10" height="10" fill="#e0e040"/><rect x="5" y="5" width="4" height="4" fill="#3060c0"/></svg>
<svg style="left:1375px;top:1026px" width="17" height="18"><ellipse cx="9" cy="9" rx="6.500" ry="6.500" fill="none" stroke="#8fd0f0" stroke-width="2.400"/><path d="M1 17Q5 6 16 1" fill="none" stroke="#e8e058" stroke-width="1.400"/></svg>

<div class="tbt" style="left:135px">15_Sounds Of Th...</div>
<div class="tbt" style="left:275px">1C</div>
<div class="tbt" style="left:414px">2 Conversations ...</div>
<div class="tbt" style="left:554px">Ventrilo</div>
<div class="tbt" style="left:694px">Chat</div>
<div class="tbt" style="left:834px">АБ Хак ганг 2 - ...</div>
<div class="tbt" style="left:974px">Pandemic Legion ...</div>
<div class="tbt" style="left:1114px">EFT - Eve Fitting ...</div>
<div class="tbt" style="left:1254px">SnimOK!</div>
<div class="tbt" style="left:1394px">EVE Files :: Uploa...</div>

<div class="tbt" style="left:1512px">RU</div>
<div style="left:1537px;top:1027px;width:13px;height:16px;background:#f4f0d8;border:1px solid #222;box-sizing:border-box;font-weight:bold;line-height:14px;text-align:center;font-size:11px">?</div>
<svg style="left:1560px;top:1025px" width="11" height="20"><rect x="3" y="1" width="5" height="4" fill="none" stroke="#fff"/><rect x="1" y="3" width="5" height="4" fill="#2860e0" stroke="#fff"/><path d="M3 14h5l-2.500 3z" fill="#d0e0ff"/></svg>
<div style="left:1587px;top:1020px;width:93px;height:30px;background:linear-gradient(#2ca6f0 0,#1090e6 15%,#1490e8 80%,#0c78d0 100%);border-left:1px solid #0a4cb4;box-sizing:border-box"></div>
<svg style="left:1578px;top:1026px" width="18" height="18"><circle cx="9" cy="9" r="8" fill="#a8d8f8"/><circle cx="9" cy="9" r="6" fill="#4aa0ec"/><path d="M11 5L7 9l4 4" fill="none" stroke="#fff" stroke-width="2.200"/></svg>
<svg style="left:1599px;top:1026px" width="14" height="18"><path d="M7 1L13 14H1Z" fill="#7bb83a"/><path d="M4 10h6v7H4z" fill="#e4c43a"/></svg>
<svg style="left:1615px;top:1026px" width="16" height="18"><path d="M8 1L15 3V10Q14 15 8 17Q2 15 1 10V3Z" fill="#c8303c" stroke="#e8e8f0"/><path d="M5 7l6 4M11 7l-6 4" stroke="#fff" stroke-width="1.400"/></svg>
<div class="tbt" style="left:1638px">23:23</div>
</body></html>
